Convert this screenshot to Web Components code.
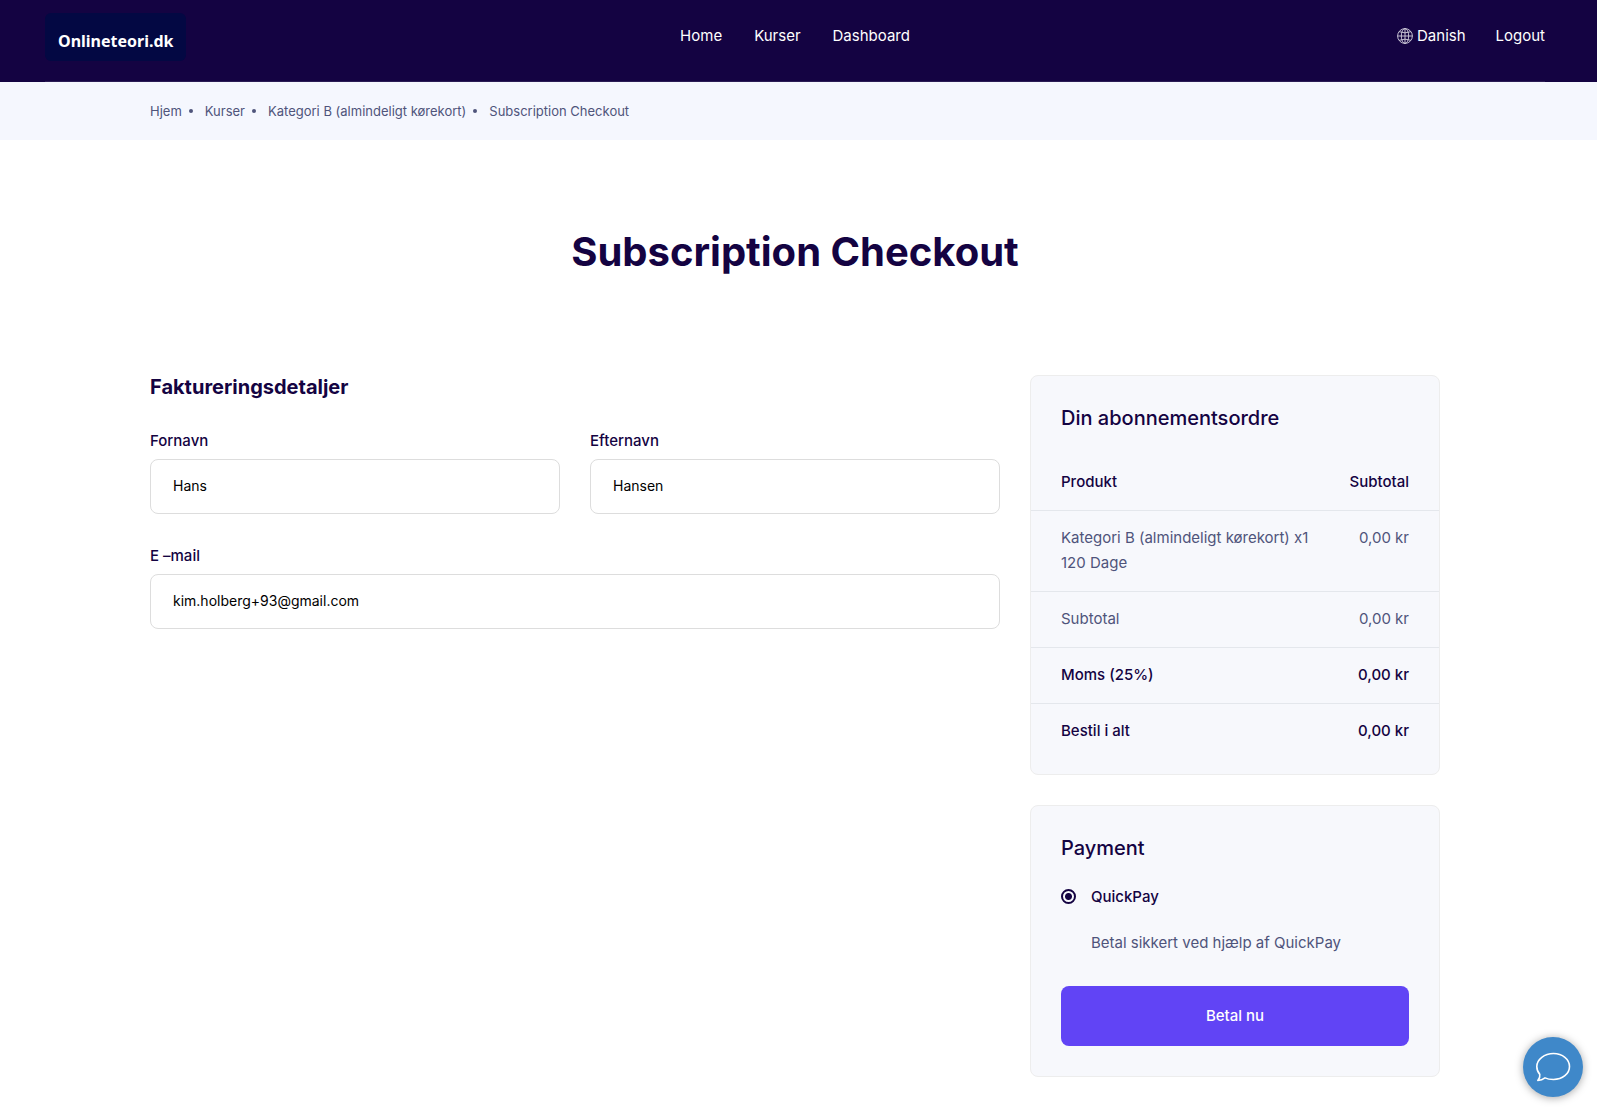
<!DOCTYPE html>
<html lang="da">
<head>
<meta charset="utf-8">
<meta name="viewport" content="width=device-width, initial-scale=1">
<title>Subscription Checkout</title>
<style>
  :root {
    --ink: #140342;
    --muted: #4f547b;
    --accent: #6144f5;
    --panel: #f7f8fc;
    --panel-line: #ededed;
    --row-line: #e4e7ec;
  }
  body {
    margin: 0;
    background: #fff;
    color: var(--ink);
    font: 400 15px/25px Inter, "Liberation Sans", sans-serif;
  }
</style>
</head>
<body>
<checkout-page></checkout-page>

<script>
const define = (name, html) => {
  const template = document.createElement('template');
  template.innerHTML = html;
  customElements.define(name, class extends HTMLElement {
    constructor() {
      super();
      this.attachShadow({ mode: 'open' }).append(template.content.cloneNode(true));
    }
  });
};

define('site-logo', `
  <style>
    :host { display: block; }
    a {
      display: flex; align-items: center; box-sizing: border-box;
      height: 48px; padding: 8px 12px 0 13px; border-radius: 6px;
      background: #030843; color: #fff; text-decoration: none;
      font: 700 16px/24px "Noto Sans", sans-serif;
    }
  </style>
  <a href="#">Onlineteori.dk</a>`);

define('globe-icon', `
  <style>:host { display: block; } svg { display: block; }</style>
  <svg width="16" height="16" viewBox="0 0 16 16" fill="none" stroke="#d5d1df" stroke-width="0.9" aria-hidden="true">
    <circle cx="8" cy="8" r="7.4"/>
    <ellipse cx="8" cy="8" rx="3.7" ry="7.4"/>
    <path d="M8 .6v14.8M.6 8h14.8M2.2 3.7Q8 6 13.8 3.7M2.2 12.3Q8 10 13.8 12.3"/>
  </svg>`);

define('site-header', `
  <style>
    :host { display: block; background: var(--ink); color: #fff; padding: 0 52px 0 45px; }
    .bar {
      display: grid; grid-template-columns: 1fr auto 1fr; align-items: start;
      box-sizing: border-box; height: 82px; padding-top: 13px;
      border-bottom: 1px solid #2b1c55;
    }
    nav { display: flex; gap: 32px; padding-top: 10px; }
    .account { justify-self: end; gap: 30px; }
    site-logo { justify-self: start; }
    a { display: flex; align-items: center; gap: 4px; color: inherit; text-decoration: none; }
  </style>
  <div class="bar">
    <site-logo></site-logo>
    <nav><a href="#">Home</a><a href="#">Kurser</a><a href="#">Dashboard</a></nav>
    <nav class="account"><a href="#"><globe-icon></globe-icon>Danish</a><a href="#">Logout</a></nav>
  </div>`);

define('bread-crumbs', `
  <style>
    :host { display: block; background: #f5f7fe; color: var(--muted); padding: 0 37px 0 30px; }
    ol {
      display: flex; align-items: center; max-width: 1290px; height: 58px;
      margin: 0 auto; padding: 0; list-style: none; font-size: 13px;
    }
    li { display: flex; align-items: center; }
    li + li::before {
      content: ""; width: 4px; height: 4px; border-radius: 50%;
      margin: 0 12px 0 7px; background: currentColor;
    }
    a { color: inherit; text-decoration: none; }
  </style>
  <nav aria-label="Breadcrumb"><ol>
    <li><a href="#">Hjem</a></li>
    <li><a href="#">Kurser</a></li>
    <li><a href="#">Kategori B (almindeligt kørekort)</a></li>
    <li><a href="#">Subscription Checkout</a></li>
  </ol></nav>`);

{
  const template = document.createElement('template');
  template.innerHTML = `
    <style>
      :host { display: flex; flex-direction: column; gap: 6px; }
      label { font-weight: 500; line-height: 24px; }
      input {
        box-sizing: border-box; width: 100%; height: 55px; padding: 0 22px 2px;
        border: 1px solid #ddd; border-radius: 8px; background: #fff;
        color: #000; font: inherit; font-size: 14px; outline: none;
      }
    </style>
    <label for="field"></label>
    <input id="field">`;
  customElements.define('text-field', class extends HTMLElement {
    constructor() {
      super();
      const root = this.attachShadow({ mode: 'open' });
      root.append(template.content.cloneNode(true));
    }
    connectedCallback() {
      const input = this.shadowRoot.querySelector('input');
      this.shadowRoot.querySelector('label').textContent = this.getAttribute('label');
      input.type = this.getAttribute('type') || 'text';
      input.value = this.getAttribute('value') || '';
    }
  });
}

define('billing-form', `
  <style>
    :host { display: block; }
    h2 { margin: 0 0 30px; font-size: 20px; line-height: 24px; font-weight: 700; }
    form { display: grid; grid-template-columns: 1fr 1fr; gap: 30px; }
    .wide { grid-column: 1 / -1; }
  </style>
  <h2>Faktureringsdetaljer</h2>
  <form>
    <text-field label="Fornavn" value="Hans"></text-field>
    <text-field label="Efternavn" value="Hansen"></text-field>
    <text-field class="wide" type="email" label="E –mail" value="kim.holberg+93@gmail.com"></text-field>
  </form>`);

define('side-panel', `
  <style>
    :host {
      display: block; padding: 30px 0; border: 1px solid var(--panel-line);
      border-radius: 8px; background: var(--panel);
    }
    ::slotted(h2) { margin: 0; padding: 0 30px; font-size: 20px; line-height: 24px; font-weight: 500; }
  </style>
  <slot name="title"></slot>
  <slot></slot>`);

define('order-summary', `
  <style>
    :host { display: block; }
    side-panel { padding-bottom: 15px; }
    table { width: 100%; margin-top: 25px; border-collapse: separate; border-spacing: 0; }
    th, td { padding: 14px 30px 16px; text-align: left; vertical-align: top; font-weight: 500; }
    th:first-child { padding-right: 0; }
    td:last-child, th:last-child { padding-left: 0; text-align: right; white-space: nowrap; }
    tbody th, tbody td { border-top: 1px solid var(--row-line); }
    .light th, .light td { font-weight: 400; color: var(--muted); }
  </style>
  <side-panel>
    <h2 slot="title">Din abonnementsordre</h2>
    <table>
      <thead><tr><th scope="col">Produkt</th><th scope="col">Subtotal</th></tr></thead>
      <tbody>
        <tr class="light"><th scope="row">Kategori B (almindeligt kørekort) x1<br>120 Dage</th><td>0,00 kr</td></tr>
        <tr class="light"><th scope="row">Subtotal</th><td>0,00 kr</td></tr>
        <tr><th scope="row">Moms (25%)</th><td>0,00 kr</td></tr>
        <tr><th scope="row">Bestil i alt</th><td>0,00 kr</td></tr>
      </tbody>
    </table>
  </side-panel>`);

define('payment-box', `
  <style>
    :host { display: block; }
    .body { padding: 24px 30px 0; }
    .method { display: grid; grid-template-columns: 15px 1fr; column-gap: 15px; row-gap: 21px; align-items: center; }
    input {
      appearance: none; box-sizing: border-box; width: 15px; height: 15px; margin: 0;
      border: 2px solid var(--ink); border-radius: 50%;
      background: radial-gradient(circle, var(--ink) 3px, transparent 4px);
    }
    label { font-weight: 500; }
    p { grid-column: 2; margin: 0; color: var(--muted); }
    button {
      display: block; width: 100%; height: 60px; margin-top: 31px; padding: 0 0 2px;
      border: 0; border-radius: 8px; background: var(--accent); color: #fff;
      font: inherit; font-weight: 500;
    }
  </style>
  <side-panel>
    <h2 slot="title">Payment</h2>
    <div class="body">
      <div class="method">
        <input type="radio" id="quickpay" name="method" checked>
        <label for="quickpay">QuickPay</label>
        <p>Betal sikkert ved hjælp af QuickPay</p>
      </div>
      <button type="button">Betal nu</button>
    </div>
  </side-panel>`);

define('chat-launcher', `
  <style>
    :host { position: fixed; right: 14px; bottom: 11px; }
    button {
      display: grid; place-items: center; width: 60px; height: 60px; padding: 0;
      border: 0; border-radius: 50%; background: #3f88c9;
      box-shadow: 0 1px 8px rgba(0, 0, 0, .35);
    }
    svg { display: block; }
  </style>
  <button type="button" aria-label="Chat">
    <svg width="36" height="30" viewBox="0 0 36 30" fill="none" stroke="#fff" stroke-width="1.6" stroke-linejoin="round" aria-hidden="true">
      <path d="M18.5 1.5C27.5 1.5 34.5 7.200 34.500 14.500S27.500 27.500 18.500 27.500C15 27.500 12.500 27.100 10 25.900C8 27.400 5.500 28.300 2.800 28.500C4.500 26.500 5.200 24.500 4.800 22.400C2.800 20.200 1.800 17.500 1.800 14.500C1.800 7.200 9.500 1.500 18.500 1.500Z"/>
    </svg>
  </button>`);

define('checkout-page', `
  <style>
    :host { display: block; }
    main { padding: 86px 37px 31px 30px; }
    h1 { margin: 0 0 97px; text-align: center; font-size: 40px; line-height: 52px; font-weight: 700; }
    .columns {
      display: grid; grid-template-columns: minmax(0, 85fr) minmax(0, 41fr); gap: 30px;
      align-items: start; max-width: 1290px; margin: 0 auto;
    }
    aside { display: grid; gap: 30px; }
  </style>
  <site-header></site-header>
  <bread-crumbs></bread-crumbs>
  <main>
    <h1>Subscription Checkout</h1>
    <div class="columns">
      <billing-form></billing-form>
      <aside><order-summary></order-summary><payment-box></payment-box></aside>
    </div>
  </main>
  <chat-launcher></chat-launcher>`);
</script>
</body>
</html>
